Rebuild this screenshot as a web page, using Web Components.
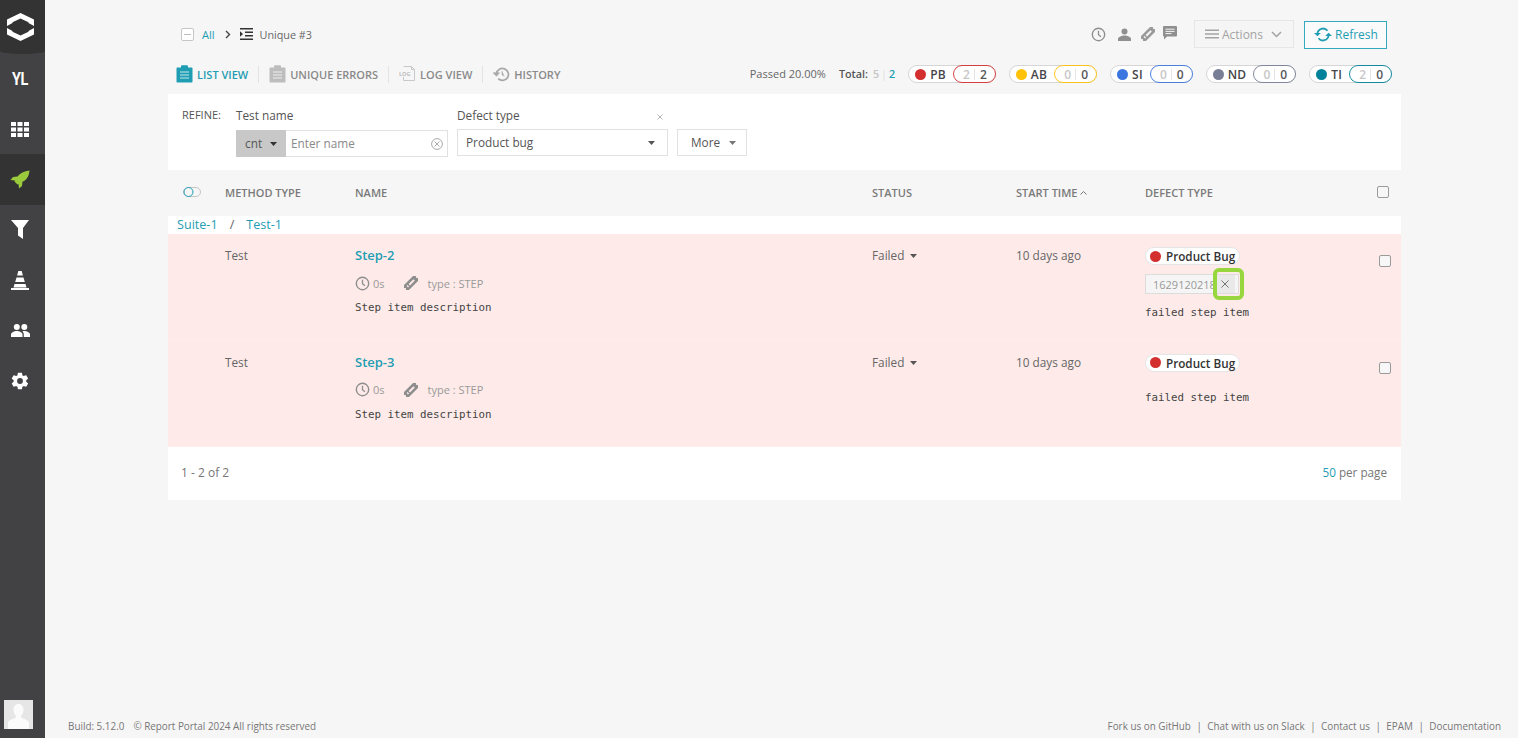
<!DOCTYPE html>
<html>
<head>
<meta charset="utf-8">
<title>Report Portal</title>
<style>
  html, body { margin: 0; height: 100%; }
  body { font-family: "Open Sans", "Liberation Sans", sans-serif; background: #f6f6f6; overflow: hidden; }
</style>
</head>
<body>
<rp-app>
  <rp-sidebar slot="side"></rp-sidebar>
  <rp-topbar></rp-topbar>
  <rp-tabs></rp-tabs>
  <rp-refine></rp-refine>
  <rp-table>
    <rp-row name="Step-2" tagged></rp-row>
    <rp-row name="Step-3"></rp-row>
  </rp-table>
  <rp-pagination></rp-pagination>
  <rp-footer slot="foot"></rp-footer>
</rp-app>

<script>
const TEAL = "#1f9db3";
const svg = (w, h, vb, body, extra = "") =>
  `<svg xmlns="http://www.w3.org/2000/svg" width="${w}" height="${h}" viewBox="${vb}" ${extra}>${body}</svg>`;

const clockIcon = (s = 15, c = "#8d8d8d") =>
  svg(s, s, "0 0 16 16", `<circle cx="8" cy="8" r="6.6" fill="none" stroke="${c}" stroke-width="1.5"/><path d="M8 4v4.3l2.6 2" fill="none" stroke="${c}" stroke-width="1.4"/>`);
// ticket drawn flat and turned 45deg, holes are punched with evenodd
const ticketIcon = (s = 14, c = "#8d8d8d") =>
  svg(s, s, "0 0 14 14", `<g transform="rotate(-45 7 7)"><path fill-rule="evenodd" d="M-1.500 3.500h17v2.400a1.100 1.100 0 0 0 0 2.200v2.400h-17V8.100a1.100 1.100 0 0 0 0-2.200zM1.800 6v2h1.400V6zM4.600 6v2h6.800V6z" fill="${c}"/></g>`);
const clipboardIcon = (c) =>
  svg(17, 18, "0 0 17 18", `<path d="M1.500 2.500H5V1.500C5 .8 5.500.3 6.200.3h4.600c.7 0 1.200.5 1.200 1.200v1h3.500c.6 0 1 .4 1 1v13c0 .6-.4 1-1 1h-14c-.6 0-1-.4-1-1v-13c0-.6.4-1 1-1z" fill="${c}"/><path d="M4 7h9M4 10h9M4 13h9" stroke="#fff" stroke-opacity=".75" stroke-width="1.200"/>`);

class RpApp extends HTMLElement {
  constructor() {
    super();
    this.attachShadow({ mode: "open" }).innerHTML = `
      <style>
        :host { display: flex; height: 738px; }
        .main { flex: 1; min-width: 0; display: flex; flex-direction: column; padding: 0 117px 0 123px; }
        .foot { margin: auto -117px 0 -100px; }
      </style>
      <slot name="side"></slot>
      <div class="main">
        <slot></slot>
        <div class="foot"><slot name="foot"></slot></div>
      </div>`;
  }
}

class RpSidebar extends HTMLElement {
  constructor() {
    super();
    const w = "#fff";
    const items = [
      `<span class="yl">YL</span>`,
      svg(18, 15, "0 0 18 15", `<path d="M0 0h5v4H0zM6.500 0h5v4h-5zM13 0h5v4h-5zM0 5.500h5v4H0zM6.500 5.500h5v4h-5zM13 5.500h5v4h-5zM0 11h5v4H0zM6.500 11h5v4h-5zM13 11h5v4h-5z" fill="${w}"/>`),
      svg(20, 19, "0 0 20 19", `<path d="M19.500.5C14 1 10 3 7.500 6.500L3 7 .5 10l4.500.5-.5 1 3 3 1-.5.5 4.500 3-2.500.5-4.500C15.500 11 19 7 19.500.5z" fill="#9bcb3c"/>`),
      svg(18, 19, "0 0 18 19", `<path d="M0 0h18l-6 8v11L7 15.500V8z" fill="${w}"/>`),
      svg(18, 19, "0 0 18 19", `<path d="M7.300 0h3.400l1.200 4.500H6.100zM5.500 6.500h7l1.300 4.500H4.200zM3.500 13h11l1 3.500h-13zM0 17h18v2H0z" fill="${w}"/>`),
      svg(19, 13, "0 0 19 13", `<circle cx="5.800" cy="3" r="3" fill="${w}"/><circle cx="13.300" cy="3" r="3" fill="${w}"/><path d="M0 13v-2.500C0 8.300 3.500 7 5.800 7s5.700 1.300 5.700 3.500V13zM12.800 13v-2.500c0-1.300-.6-2.500-1.500-3.200.7-.2 1.400-.3 2-.3 2.200 0 5.700 1.300 5.700 3.500V13z" fill="${w}"/>`),
      svg(20, 20, "0 0 24 24", `<path fill-rule="evenodd" d="M19.400 13c.1-.3.1-.7.1-1s0-.7-.1-1l2.100-1.600c.2-.2.2-.4.100-.6l-2-3.500c-.1-.2-.4-.3-.6-.2l-2.500 1c-.5-.4-1.100-.7-1.700-1L14.400 2.500c0-.3-.2-.5-.5-.5h-4c-.2 0-.4.200-.5.500L9 5.100c-.6.300-1.100.6-1.700 1l-2.500-1c-.2-.1-.5 0-.6.200l-2 3.500c-.1.200-.1.500.1.600L4.400 11c0 .3-.1.700-.1 1s0 .7.100 1l-2.100 1.600c-.2.200-.2.400-.1.600l2 3.500c.1.200.4.300.6.200l2.500-1c.5.400 1.100.7 1.700 1l.4 2.600c0 .3.200.5.500.5h4c.2 0 .4-.2.500-.5l.4-2.600c.6-.3 1.200-.6 1.700-1l2.500 1c.2.100.5 0 .6-.2l2-3.500c.1-.2.1-.5-.1-.6zM12 15.500a3.500 3.500 0 1 1 0-7 3.500 3.500 0 0 1 0 7z" fill="${w}"/>`),
    ];
    this.attachShadow({ mode: "open" }).innerHTML = `
      <style>
        :host { display: flex; flex-direction: column; flex: none; width: 45px; height: 738px; background: #424244; }
        .logo { height: 53.700px; flex: none; display: flex; align-items: center; justify-content: center; padding-right: 5px; box-sizing: border-box; background: #333334; border-radius: 0 0 50% 50% / 0 0 3px 3px; }
        .item { height: 50.300px; flex: none; display: flex; align-items: center; justify-content: center; padding-right: 5px; box-sizing: border-box; }
        .item.active { background: #333334; }
        .yl { color: #fff; font: 700 18px Roboto, "Liberation Sans", sans-serif; letter-spacing: -.5px; transform: scaleX(.8); }
        .avatar { margin: auto 0 9px 4px; width: 29px; height: 29px; background: #e9e9e9; display: block; }
      </style>
      <div class="logo">${svg(27, 28, "0 0 27 28", `<path d="M0 6.500L13.500 0 27 6.500V13l-5.500-3v-.8l-8-3.700-8 3.700v.8L0 13z" fill="#fff"/><path d="M27 21.500L13.500 28 0 21.500V15l5.500 3v.8l8 3.700 8-3.700V18l5.500-3z" fill="#fff"/>`)}</div>
      ${items.map((s, i) => `<div class="item${i === 2 ? " active" : ""}">${s}</div>`).join("")}
      ${svg(29, 29, "0 0 29 29", `<rect width="29" height="29" fill="#e6e6e6"/><path d="M14.500 4c3.200 0 5 2.500 5 5.800 0 2.500-1 4.700-2.300 5.900v2.100c2.700 1 7 2.200 7.800 4.700V29H4v-6.500c.8-2.500 5.100-3.700 7.800-4.700v-2.100C10.500 14.500 9.500 12.300 9.500 9.800 9.500 6.500 11.300 4 14.500 4z" fill="#fbfbfb"/>`, 'class="avatar"')}`;
  }
}

class RpTopbar extends HTMLElement {
  constructor() {
    super();
    this.attachShadow({ mode: "open" }).innerHTML = `
      <style>
        :host { display: flex; align-items: center; height: 50px; padding: 18px 14px 0 13px; box-sizing: border-box; font-size: 11px; color: #555; }
        .all { color: ${TEAL}; margin: 0 10px 0 8px; }
        .sep { margin-right: 9px; display: flex; }
        .cur { margin-left: 7px; color: #666; font-size: 10.800px; }
        .right { margin-left: auto; display: flex; align-items: center; }
        .ic { display: flex; }
        .btn { box-sizing: border-box; height: 28px; display: flex; align-items: center; font-size: 12px; margin-top: 1px; }
        .actions { width: 100px; margin: 0 10px 0 17px; background: #f5f5f5; border: 1px solid #e6e6e6; color: #a3a3a3; padding-left: 10px; }
        .refresh { width: 83px; border: 1px solid #37a9bf; color: ${TEAL}; background: #fafafa; padding-left: 9px; }
      </style>
      ${svg(13, 13, "0 0 13 13", `<rect x=".5" y=".5" width="12" height="12" rx="1.500" fill="#fff" stroke="#c6c6c6"/><path d="M3 6.500h7" stroke="#bdbdbd"/>`)}
      <span class="all">All</span>
      <span class="sep">${svg(6, 9, "0 0 6 9", `<path d="M1 1l3.500 3.500L1 8" fill="none" stroke="#444" stroke-width="1.400"/>`)}</span>
      ${svg(13, 12, "0 0 13 12", `<path d="M0 0h13v1.600H0zM0 10.400h13V12H0zM5 3.400h8V5H5zM5 7h8v1.600H5zM0 3.200L3 6 0 8.800z" fill="#333"/>`)}
      <span class="cur">Unique #3</span>
      <div class="right">
        <span class="ic" style="margin-right:12px">${clockIcon(15, "#8f8f8f")}</span>
        <span class="ic" style="margin-right:10px">${svg(13, 13, "0 0 13 13", `<circle cx="6.500" cy="3.500" r="3" fill="#8f8f8f"/><path d="M0 13v-2c0-2 4-3.500 6.500-3.500S13 9 13 11v2z" fill="#8f8f8f"/>`)}</span>
        <span class="ic" style="margin-right:8px">${ticketIcon(14, "#9a9a9a")}</span>
        <span class="ic" style="margin-top:-3px">${svg(14, 14, "0 0 14 14", `<path d="M1 0h12a1 1 0 0 1 1 1v8.500a1 1 0 0 1-1 1H4L1 13.500v-3a1 1 0 0 1-1-1V1a1 1 0 0 1 1-1z" fill="#8f8f8f"/><path d="M2.500 3.200h9M2.500 5.400h9M2.500 7.600h6" stroke="#f5f5f5"/>`)}</span>
        <div class="btn actions">
          ${svg(14, 10, "0 0 14 10", `<path d="M0 .5h14v1.400H0zM0 4.300h14v1.400H0zM0 8.100h14v1.400H0z" fill="#a3a3a3"/>`)}
          <span style="margin:0 8px 0 3px">Actions</span>
          ${svg(11, 7, "0 0 11 7", `<path d="M1 1l4.500 4.500L10 1" fill="none" stroke="#a3a3a3" stroke-width="1.500"/>`)}
        </div>
        <div class="btn refresh">
          ${svg(18, 15, "0 0 18 15", `<path d="M3.400 6.500A5.700 5.700 0 0 1 13.500 3.700M14.600 8.500A5.700 5.700 0 0 1 4.500 11.300" fill="none" stroke="${TEAL}" stroke-width="1.800"/><path d="M0 6l3.400 3.300L6.800 6zM11.200 9l3.400-3.300L18 9z" fill="${TEAL}"/>`)}
          <span style="margin-left:3px">Refresh</span>
        </div>
      </div>`;
  }
}

class RpPill extends HTMLElement {
  connectedCallback() {
    const a = (n) => this.getAttribute(n);
    this.attachShadow({ mode: "open" }).innerHTML = `
      <style>
        :host { display: inline-flex; align-items: center; box-sizing: border-box; height: 18px; border: 1px solid #d6d6d6; border-radius: 9px; background: #fff; margin-left: 13px; font-size: 12px; font-weight: 600; color: #464547; }
        .dot { width: 11px; height: 11px; border-radius: 50%; margin-left: 6px; background: ${a("color")}; }
        .code { margin: 0 7px 0 4px; letter-spacing: .3px; }
        .val { display: flex; align-items: center; justify-content: center; height: 18px; box-sizing: border-box; margin: -1px -1px -1px 0; padding: 0 8px 0 9px; border: 1px solid ${a("color")}; border-radius: 9px; background: #fff; opacity: .9; }
        .a { color: #c2c2c2; }
        .b { margin-left: 4px; padding-left: 5px; border-left: 1px solid #e2e2e2; line-height: 11px; }
      </style>
      <span class="dot"></span><span class="code">${a("code")}</span>
      <span class="val"><span class="a">${a("a")}</span><span class="b">${a("b")}</span></span>`;
  }
}

class RpTabs extends HTMLElement {
  constructor() {
    super();
    this.attachShadow({ mode: "open" }).innerHTML = `
      <style>
        :host { display: flex; align-items: center; height: 44px; padding: 4px 9px 0 8px; box-sizing: border-box; font-size: 11px; font-weight: 600; color: #8a8a8a; }
        .tab { display: flex; align-items: center; gap: 4px; }
        .tab.on { color: ${TEAL}; }
        .div { width: 1px; height: 17px; background: #e3e3e3; margin: 0 10px; }
        .right { margin-left: auto; display: flex; align-items: center; }
        .passed { color: #666; font-weight: 400; margin-right: 13px; margin-top: -2px; }
        .total { color: #555; margin-top: -2px; font-size: 10.800px; }
        .total i { font-style: normal; color: #c6c6c6; margin-left: 2px; }
        .total b { font-weight: 600; color: ${TEAL}; }
        .total u { text-decoration: none; color: #ddd; font-weight: 400; margin: 0 2px; }
      </style>
      <div class="tab on">${clipboardIcon("#1f9db3")}<span>LIST VIEW</span></div>
      <div class="div"></div>
      <div class="tab">${clipboardIcon("#bdbdbd")}<span>UNIQUE ERRORS</span></div>
      <div class="div"></div>
      <div class="tab">${svg(17, 16, "0 0 17 16", `<path d="M4.500.5h8l3 3v11h-11V11M12.500.5v3h3" fill="none" stroke="#c8c8c8"/><text x="0" y="10" font-size="5.500" font-weight="700" fill="#bdbdbd" font-family="Open Sans">LOG</text>`)}<span>LOG VIEW</span></div>
      <div class="div"></div>
      <div class="tab">${svg(17, 15, "0 0 17 15", `<path d="M3.500 6.500a6 6 0 1 1 1.700 5.200" fill="none" stroke="#a8a8a8" stroke-width="1.800"/><path d="M0 5.800h6.500L3.500 9.200zM9 4v3.800l2.500 1.500" fill="#a8a8a8" stroke="#a8a8a8" stroke-width=".6"/>`)}<span>HISTORY</span></div>
      <div class="right">
        <span class="passed">Passed 20.00%</span>
        <span class="total">Total:<i> 5</i><u>|</u><b>2</b></span>
        <rp-pill code="PB" color="#d32f2f" a="2" b="2"></rp-pill>
        <rp-pill code="AB" color="#ffc208" a="0" b="0"></rp-pill>
        <rp-pill code="SI" color="#3a75e0" a="0" b="0"></rp-pill>
        <rp-pill code="ND" color="#777e95" a="0" b="0"></rp-pill>
        <rp-pill code="TI" color="#00829b" a="2" b="0"></rp-pill>
      </div>`;
  }
}

class RpRefine extends HTMLElement {
  constructor() {
    super();
    const caret = (c = "#333") => svg(7, 4, "0 0 7 4", `<path d="M0 0h7L3.500 4z" fill="${c}" />`, 'style="margin-top:2px"');
    this.attachShadow({ mode: "open" }).innerHTML = `
      <style>
        :host { display: flex; height: 76px; background: #fff; padding: 13px 0 0 14px; box-sizing: border-box; font-size: 11.800px; color: #555; }
        .label { width: 54px; font-size: 11px; }
        .field { display: flex; flex-direction: column; }
        .title { height: 23px; color: #555; display: flex; justify-content: space-between; }
        .title svg { margin: 7px 5px 0 0; }
        .box { display: flex; align-items: center; box-sizing: border-box; height: 27px; padding-bottom: 2px; border: 1px solid #e1e1e1; background: #fff; }
        .cond { width: 50px; height: 27px; margin: -1px 0 -3px -1px; padding: 0 0 2px 9px; background: #c8c8c8; display: flex; align-items: center; box-sizing: border-box; gap: 8px; color: #555; flex: none; }
        .name { width: 212px; }
        .name span.ph { margin-left: 5px; color: #8a8a8a; flex: 1; }
        .name svg.x { margin: 2px 4px 0 0; }
        .type { width: 211px; margin-left: 9px; }
        .type .title { height: 22px; }
        .sel { padding: 0 12px 2px 8px; justify-content: space-between; color: #555; }
        .more { width: 70px; margin: 22px 0 0 9px; padding: 0 10px 2px 13px; justify-content: space-between; }
      </style>
      <span class="label">REFINE:</span>
      <div class="field">
        <div class="title">Test name</div>
        <div class="box name">
          <div class="cond">cnt ${caret()}</div>
          <span class="ph">Enter name</span>
          ${svg(12, 12, "0 0 12 12", `<circle cx="6" cy="6" r="5.400" fill="none" stroke="#aaa"/><path d="M3.500 3.500l5 5M8.500 3.500l-5 5" stroke="#aaa"/>`, 'class="x"')}
        </div>
      </div>
      <div class="field type">
        <div class="title">Defect type ${svg(6, 6, "0 0 6 6", `<path d="M.5.5l5 5M5.500.5l-5 5" stroke="#b5b5b5"/>`)}</div>
        <div class="box sel">Product bug ${caret("#555")}</div>
      </div>
      <div class="box sel more">More ${caret("#777")}</div>`;
  }
}

class RpTable extends HTMLElement {
  constructor() {
    super();
    this.attachShadow({ mode: "open" }).innerHTML = `
      <style>
        :host { display: block; font-size: 11px; color: #777; }
        .head { display: grid; grid-template-columns: 57px 130px 517px 144px 129px 232px 1fr; height: 46px; box-sizing: border-box; padding-bottom: 2px; align-items: center; font-weight: 600; color: #7a7a7a; }
        .head > :first-child { padding-left: 15px; display: flex; }
        .head svg { display: block; }
        .crumbs { display: flex; align-items: center; height: 18px; box-sizing: border-box; padding: 0 0 2px 9px; background: #fff; color: ${TEAL}; font-size: 12.600px; }
        .crumbs i { font-style: normal; color: #666; margin: 0 12px; }
      </style>
      <div class="head">
        <div>${svg(18, 10, "0 0 18 10", `<rect x=".5" y=".5" width="17" height="9" rx="4.500" fill="none" stroke="#c4c4c4"/><circle cx="5.500" cy="5" r="4.500" fill="#f5f5f5" stroke="${TEAL}"/>`)}</div>
        <div>METHOD TYPE</div>
        <div>NAME</div>
        <div>STATUS</div>
        <div>START TIME ${svg(7, 4, "0 0 7 4", `<path d="M.5 3.500l3-3 3 3" fill="none" stroke="#777"/>`, 'style="display:inline;vertical-align:2px"')}</div>
        <div>DEFECT TYPE</div>
        <rp-check></rp-check>
      </div>
      <div class="crumbs">Suite-1<i>/</i>Test-1</div>
      <slot></slot>`;
  }
}

class RpCheck extends HTMLElement {
  constructor() {
    super();
    this.attachShadow({ mode: "open" }).innerHTML = `
      <style>
        :host { display: block; box-sizing: border-box; width: 12px; height: 12px; border: 1px solid #9a9a9a; border-radius: 2px; background: #f7f7f7; }
      </style>`;
  }
}

class RpRow extends HTMLElement {
  connectedCallback() {
    const tagged = this.hasAttribute("tagged");
    this.attachShadow({ mode: "open" }).innerHTML = `
      <style>
        :host { display: grid; grid-template-columns: 57px 130px 517px 144px 129px 234px 1fr; height: 106.500px; box-sizing: border-box; background: #feebe9; border-bottom: 1px solid #fdeeec; padding-top: 13px; font-size: 11.800px; color: #666; }
        .name { font-weight: 600; font-size: 13px; color: ${TEAL}; height: 24px; line-height: 16px; }
        .meta { display: flex; align-items: center; height: 18px; margin-top: 3px; color: #999; font-size: 11px; }
        .meta .zero { margin-left: 3px; margin-right: 19px; }
        .meta .type { margin-left: 10px; }
        .mono { font: 10.800px "DejaVu Sans Mono", "Liberation Mono", monospace; color: #444; margin-top: 9px; }
        .status { display: flex; align-items: flex-start; gap: 6px; line-height: 17px; }
        .status svg { margin-top: 7px; }
        .chip { display: flex; width: fit-content; align-items: center; box-sizing: border-box; height: 18px; padding: 0 4px; background: #fff; border: 1px solid #e5e5e5; border-radius: 9px; font-weight: 600; font-size: 11.700px; color: #333; gap: 5px; }
        .chip i { width: 11px; height: 11px; border-radius: 50%; background: #d32f2f; }
        .tag { position: relative; display: flex; align-items: center; box-sizing: border-box; width: 94px; height: 20px; margin-top: 9px; border: 1px solid #dcdcdc; background: #f5f5f5; font-size: 11px; color: #999; padding-left: 7px; }
        .tag span { width: 62px; overflow: hidden; white-space: nowrap; }
        .tag b { position: absolute; left: 68px; top: 0; bottom: 0; width: 21px; display: flex; align-items: center; justify-content: center; background: #e9e9e9; }
        .ring { position: absolute; left: 67px; top: -7px; width: 31px; height: 32px; box-sizing: border-box; border: 4px solid #97d63c; border-radius: 6px; }
        .desc { margin-top: ${tagged ? 12 : 19}px; }
        rp-check { margin-top: 8px; }
      </style>
      <div></div>
      <div>Test</div>
      <div>
        <div class="name">${this.getAttribute("name")}</div>
        <div class="meta">${clockIcon(15)}<span class="zero">0s</span>${ticketIcon(14)}<span class="type">type : STEP</span></div>
        <div class="mono">Step item description</div>
      </div>
      <div class="status">Failed ${svg(7, 4, "0 0 7 4", `<path d="M0 0h7L3.500 4z" fill="#555"/>`)}</div>
      <div>10 days ago</div>
      <div>
        <div class="chip"><i></i>Product Bug</div>
        ${tagged ? `<div class="tag"><span>1629120218</span><b>${svg(8, 8, "0 0 9 9", `<path d="M.5.500l8 8M8.500.500l-8 8" stroke="#666"/>`)}</b><div class="ring"></div></div>` : ""}
        <div class="mono desc">failed step item</div>
      </div>
      <rp-check></rp-check>`;
  }
}

class RpPagination extends HTMLElement {
  constructor() {
    super();
    this.attachShadow({ mode: "open" }).innerHTML = `
      <style>
        :host { display: flex; align-items: center; justify-content: space-between; height: 53px; background: #fff; padding: 0 14px 2px 13px; box-sizing: border-box; font-size: 12px; color: #777; }
        b { font-weight: 400; color: ${TEAL}; }
        .pp { font-size: 11.700px; margin-top: -1px; }
      </style>
      <span>1 - 2 of 2</span>
      <span class="pp"><b>50</b> per page</span>`;
  }
}

class RpFooter extends HTMLElement {
  constructor() {
    super();
    this.attachShadow({ mode: "open" }).innerHTML = `
      <style>
        :host { display: flex; justify-content: space-between; height: 19px; padding: 0 17px 0 0; font-size: 9.900px; color: #777; }
        .left { display: flex; gap: 9px; }
        .links { display: flex; gap: 5.500px; }
        i { font-style: normal; }
      </style>
      <span class="left"><span>Build: 5.12.0</span><span>© Report Portal 2024 All rights reserved</span></span>
      <span class="links"><span>Fork us on GitHub</span><i>|</i><span>Chat with us on Slack</span><i>|</i><span>Contact us</span><i>|</i><span>EPAM</span><i>|</i><span>Documentation</span></span>`;
  }
}

customElements.define("rp-app", RpApp);
customElements.define("rp-sidebar", RpSidebar);
customElements.define("rp-topbar", RpTopbar);
customElements.define("rp-pill", RpPill);
customElements.define("rp-tabs", RpTabs);
customElements.define("rp-refine", RpRefine);
customElements.define("rp-table", RpTable);
customElements.define("rp-check", RpCheck);
customElements.define("rp-row", RpRow);
customElements.define("rp-pagination", RpPagination);
customElements.define("rp-footer", RpFooter);
</script>
</body>
</html>
